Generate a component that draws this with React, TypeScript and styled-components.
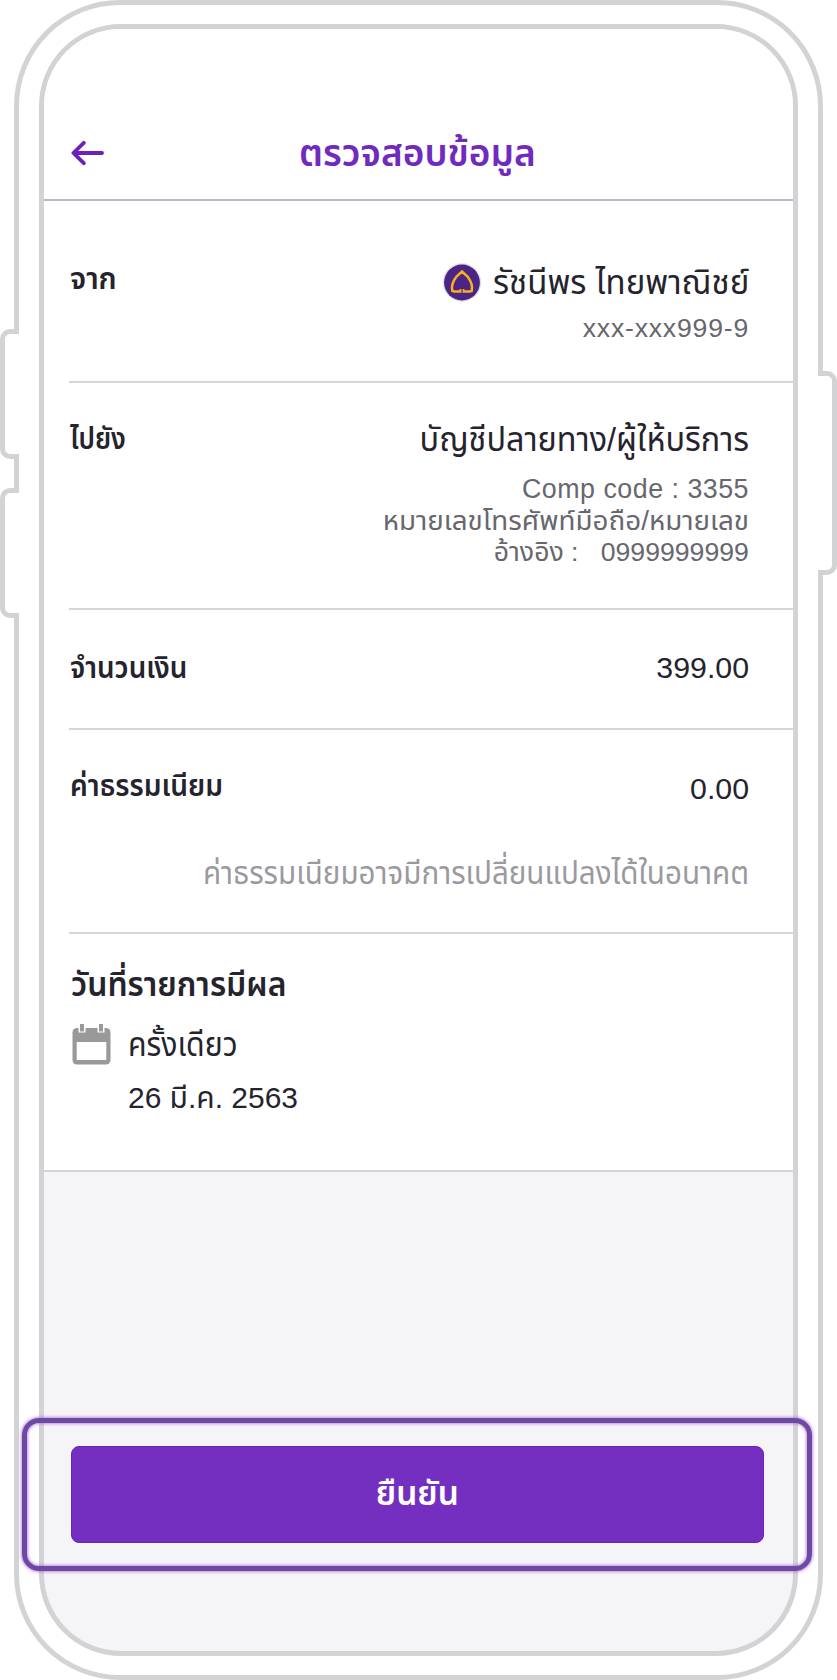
import React from 'react';
import styled, { createGlobalStyle, css } from 'styled-components';

const GlobalStyle = createGlobalStyle`
  * { box-sizing: border-box; }
  body { margin: 0; background: #fff; font-family: "Liberation Sans", "Noto Sans Thai", sans-serif; }
`;

const bezel = '#d1d3d4';
const muted = '#68666e';

const Stage = styled.div`
  position: relative;
  width: 837px;
  height: 1680px;
  padding: 0 14px;
  overflow: hidden;
`;

const Phone = styled.div`
  height: 1680px;
  padding: 19px 20px;
  border: 5px solid ${bezel};
  border-radius: 106px;
  background: #fff;
`;

const Screen = styled.main`
  display: flex;
  flex-direction: column;
  height: 1632px;
  border: 5px solid ${bezel};
  border-radius: 82px;
  background: #f5f5f8;
  overflow: hidden;
`;

const SideKey = styled.span<{ $side: 'left' | 'right'; $top: number; $height: number }>`
  position: absolute;
  top: ${p => p.$top}px;
  width: 19px;
  height: ${p => p.$height}px;
  border: 5px solid ${bezel};
  background: #fff;
  ${p => p.$side === 'left'
    ? css`left: 0; border-right: 0; border-radius: 10px 0 0 10px;`
    : css`right: 0; border-left: 0; border-radius: 0 10px 10px 0;`}
`;

interface TextProps {
  $size: number;
  $weight?: number;
  $color?: string;
  $scale?: number;
  $from?: 'left' | 'right' | 'center';
  $track?: number;
  $line?: number;
  $above?: number;
  $indent?: number;
}

const Text = styled.span<TextProps>`
  display: block;
  flex: none;
  width: max-content;
  margin: ${p => p.$above ?? 0}px 0 0 ${p => p.$indent ?? 0}px;
  white-space: pre;
  font-size: ${p => p.$size}px;
  font-weight: ${p => p.$weight ?? 400};
  line-height: ${p => p.$line ?? 40}px;
  letter-spacing: ${p => p.$track ?? 0}px;
  color: ${p => p.$color ?? '#25232d'};
  transform: scaleX(${p => p.$scale ?? 1});
  transform-origin: ${p => p.$from ?? 'left'} center;
`;

const Header = styled.header`
  display: grid;
  grid-template-columns: 1fr auto 1fr;
  align-items: center;
  height: 172px;
  padding: 78px 30px 0 27px;
  background: #fff;
  border-bottom: 2px solid #b9b7c1;
`;

const Details = styled.div`
  background: #fff;
  border-bottom: 2px solid #d5d4dc;
`;

const Section = styled.section<{ $height: number; $top: number; $last?: boolean }>`
  height: ${p => p.$height}px;
  margin-left: 25px;
  padding: ${p => p.$top}px 44px 0 1px;
  border-bottom: ${p => (p.$last ? 0 : 2)}px solid #d5d5da;
`;

const Pair = styled.div`
  display: flex;
  justify-content: space-between;
  align-items: flex-start;
`;

const Values = styled.div<{ $above?: number }>`
  display: flex;
  flex-direction: column;
  align-items: flex-end;
  margin-top: ${p => p.$above ?? 0}px;
`;

const Account = styled.div`
  display: flex;
  align-items: center;
  justify-content: space-between;
  width: 307px;
`;

const Schedule = styled.div`
  display: grid;
  grid-template-columns: 39px 1fr;
  column-gap: 17px;
  align-items: center;
  padding-left: 2px;
  margin-top: 19px;
`;

const ScheduleDate = styled.div`
  grid-column: 2;
  margin-top: 13px;
`;

const Footer = styled.footer`
  padding: 274px 29px 0 27px;
`;

const Confirm = styled.button`
  display: flex;
  align-items: center;
  justify-content: center;
  width: 693px;
  height: 97px;
  padding: 0 0 3px;
  border: 1px solid #6a22b8;
  border-radius: 8px;
  background: #752fc0;
  font-family: inherit;
`;

const Highlight = styled.div`
  position: absolute;
  left: 22px;
  top: 1418px;
  width: 790px;
  height: 153px;
  border: 5px solid #6b4aa2;
  border-radius: 17px;
  box-shadow: 0 0 3px 1px rgba(180, 80, 215, .65), inset 0 0 3px 1px rgba(180, 80, 215, .65);
  pointer-events: none;
`;

const BackIcon = () => (
  <svg width="34" height="26" viewBox="0 0 34 26" fill="none" stroke="#6d1fbe" strokeWidth="3.8" strokeLinecap="round" strokeLinejoin="round">
    <path d="M12.800 2.800 2.400 13 12.800 23.200M2.600 13H31" />
  </svg>
);

const BankIcon = () => (
  <svg width="40" height="40" viewBox="0 0 40 40">
    <circle cx="20" cy="20.500" r="19.2" fill="#dedbe6" />
    <circle cx="20" cy="20.500" r="17.9" fill="#4b2585" />
    <path d="M18.800 27V29.600C16 29.200 13.500 30.200 10.200 28.800 9.200 24 11.500 18.500 14.500 14.500L20 9.500 25.500 14.500C28.500 18.500 30.800 24 29.800 28.800 26.500 30.200 24 29.200 21.200 29.600V27" fill="none" stroke="#f9ae1d" strokeWidth="2.500" />
    <path d="M20 26v6" stroke="#4b2585" strokeWidth="1.200" />
  </svg>
);

const CalendarIcon = () => (
  <svg width="39" height="41" viewBox="0 0 39 41">
    <rect x="0.500" y="4" width="38" height="36.500" rx="4.500" fill="#999" />
    <rect x="4.700" y="18" width="29.600" height="18" fill="#fff" />
    <path d="M6.500 0h7v8.500h-7zM25.500 0h7v8.500h-7z" fill="#fff" />
    <path d="M8 0h4v7.500H8zM27 0h4v7.500h-4z" fill="#999" />
  </svg>
);

export default function App() {
  return (
    <>
      <GlobalStyle />
      <Stage>
        <Phone>
          <Screen>
            <Header>
              <BackIcon />
              <Text as="h1" $size={38} $weight={600} $color="#702abd" $scale={0.975} $from="center">ตรวจสอบข้อมูล</Text>
            </Header>
            <Details>
              <Section $height={182} $top={58}>
                <Pair>
                  <Text $size={30} $weight={600} $scale={0.98}>จาก</Text>
                  <Values $above={3}>
                    <Account>
                      <BankIcon />
                      <Text $size={34} $scale={0.97} $from="right">รัชนีพร ไทยพาณิชย์</Text>
                    </Account>
                    <Text $size={26.6} $color={muted} $track={0.8} $above={6}>xxx-xxx999-9</Text>
                  </Values>
                </Pair>
              </Section>
              <Section $height={227} $top={36}>
                <Pair>
                  <Text $size={30} $weight={600} $scale={0.88}>ไปยัง</Text>
                  <Values>
                    <Text $size={34} $scale={0.952} $from="right">บัญชีปลายทาง/ผู้ให้บริการ</Text>
                    <Text $size={26.8} $color={muted} $line={31} $above={15} $track={0.5}>Comp code : 3355</Text>
                    <Text $size={27} $color={muted} $line={31} $above={1} $scale={1.029} $from="right">หมายเลขโทรศัพท์มือถือ/หมายเลข</Text>
                    <Text $size={26.5} $color={muted} $line={31} $scale={1.005} $from="right">อ้างอิง :   0999999999</Text>
                  </Values>
                </Pair>
              </Section>
              <Section $height={120} $top={38}>
                <Pair>
                  <Text $size={30} $weight={600} $scale={0.925}>จำนวนเงิน</Text>
                  <Text $size={30.3}>399.00</Text>
                </Pair>
              </Section>
              <Section $height={204} $top={36}>
                <Pair>
                  <Text $size={30} $weight={600} $scale={0.935}>ค่าธรรมเนียม</Text>
                  <Text $size={30.3} $above={3}>0.00</Text>
                </Pair>
                <Values $above={44}>
                  <Text $size={32} $color="#9b99a0" $scale={0.924} $from="right">ค่าธรรมเนียมอาจมีการเปลี่ยนแปลงได้ในอนาคต</Text>
                </Values>
              </Section>
              <Section $height={236} $top={31} $last>
                <Text $size={33} $weight={600} $scale={0.967} $indent={1}>วันที่รายการมีผล</Text>
                <Schedule>
                  <CalendarIcon />
                  <Text $size={33} $scale={0.915}>ครั้งเดียว</Text>
                  <ScheduleDate>
                    <Text $size={30} $scale={0.998}>26 มี.ค. 2563</Text>
                  </ScheduleDate>
                </Schedule>
              </Section>
            </Details>
            <Footer>
              <Confirm><Text $size={34} $weight={600} $color="#fff" $scale={0.98} $from="center">ยืนยัน</Text></Confirm>
            </Footer>
          </Screen>
        </Phone>
        <SideKey $side="left" $top={329} $height={130} />
        <SideKey $side="left" $top={488} $height={130} />
        <SideKey $side="right" $top={371} $height={204} />
        <Highlight />
      </Stage>
    </>
  );
}
